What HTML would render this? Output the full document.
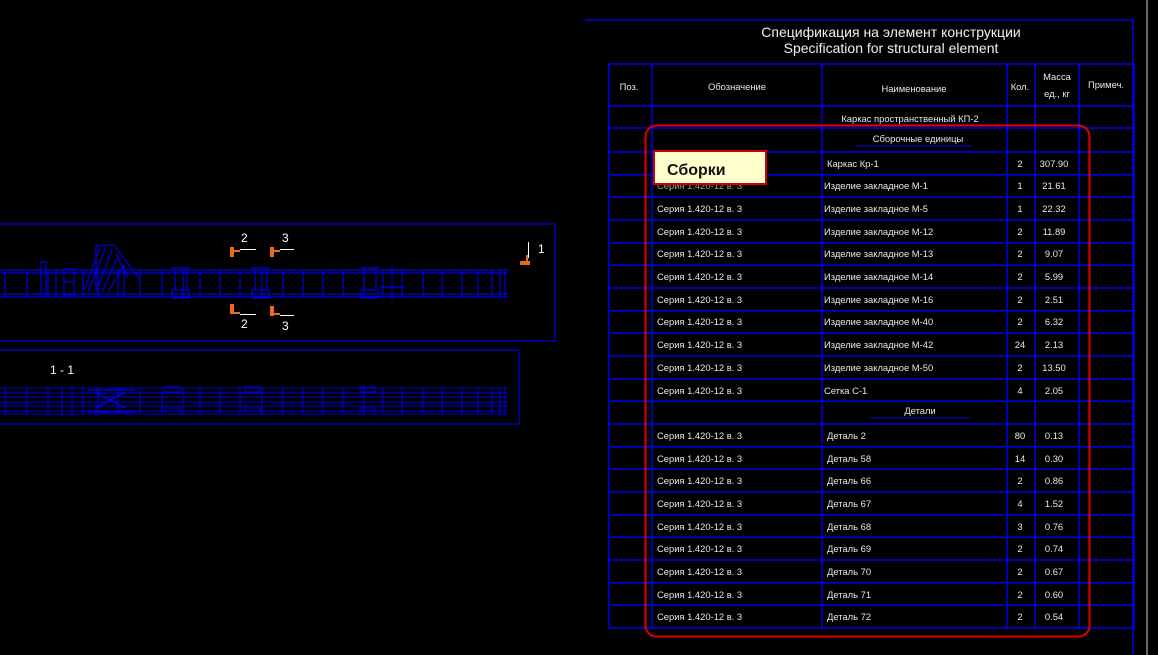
<!DOCTYPE html>
<html><head><meta charset="utf-8"><style>
html,body{margin:0;padding:0;background:#000;width:1158px;height:655px;overflow:hidden}
svg{display:block}
.t{font-family:"Liberation Sans",sans-serif;font-size:9.4px;fill:#e8e8e8}
.h{font-family:"Liberation Sans",sans-serif;font-size:14px;fill:#f0f0f0}
.w{font-family:"Liberation Sans",sans-serif;font-size:12px;fill:#fff}
</style></head><body>
<svg width="1158" height="655" viewBox="0 0 1158 655" xmlns="http://www.w3.org/2000/svg">
<g stroke="#0000dd" stroke-width="1.5" fill="none">
<path d="M585 20H1133V655"/>
</g>
<line x1="1147" y1="0" x2="1147" y2="655" stroke="#888" stroke-width="1.5"/>
<text class="h" x="891" y="37" text-anchor="middle">Спецификация на элемент конструкции</text>
<text class="h" x="891" y="53" text-anchor="middle">Specification for structural element</text>
<g stroke="#0000ee" stroke-width="1.5" fill="none">
<rect x="609" y="64" width="525" height="564"/>
<path d="M652 64V628M822 64V628M1007 64V628M1035 64V628M1079 64V628"/>
<path d="M609 106H1134M609 128H1134M609 152H1134
M609 174.7H1134M609 197.3H1134M609 220H1134M609 242.7H1134M609 265.3H1134M609 288H1134M609 310.7H1134M609 333.3H1134M609 356H1134M609 378.7H1134M609 401.3H1134M609 424H1134M609 446.7H1134M609 469.3H1134M609 492H1134M609 514.7H1134M609 537.3H1134M609 560H1134M609 582.7H1134M609 605.3H1134"/>
<path d="M855 146H972M870 418H970" stroke-width="1"/>
</g>
<g class="t">
<text x="629" y="90" text-anchor="middle">Поз.</text>
<text x="737" y="90" text-anchor="middle">Обозначение</text>
<text x="914" y="92" text-anchor="middle">Наименование</text>
<text x="1020" y="90" text-anchor="middle">Кол.</text>
<text x="1057" y="80" text-anchor="middle">Масса</text>
<text x="1057" y="97" text-anchor="middle">ед., кг</text>
<text x="1106" y="88" text-anchor="middle">Примеч.</text>
<text x="910" y="122" text-anchor="middle">Каркас пространственный КП-2</text>
<text x="918" y="142" text-anchor="middle">Сборочные единицы</text>
<text x="920" y="414" text-anchor="middle">Детали</text>
</g>
<g class="t">
<text x="827" y="167">Каркас Кр-1</text><text x="1020" y="167" text-anchor="middle">2</text><text x="1054" y="167" text-anchor="middle">307.90</text>
<text x="657" y="189">Серия 1.420-12 в. 3</text><text x="824" y="189">Изделие закладное М-1</text><text x="1020" y="189" text-anchor="middle">1</text><text x="1054" y="189" text-anchor="middle">21.61</text>
<text x="657" y="212">Серия 1.420-12 в. 3</text><text x="824" y="212">Изделие закладное М-5</text><text x="1020" y="212" text-anchor="middle">1</text><text x="1054" y="212" text-anchor="middle">22.32</text>
<text x="657" y="235">Серия 1.420-12 в. 3</text><text x="824" y="235">Изделие закладное М-12</text><text x="1020" y="235" text-anchor="middle">2</text><text x="1054" y="235" text-anchor="middle">11.89</text>
<text x="657" y="257">Серия 1.420-12 в. 3</text><text x="824" y="257">Изделие закладное М-13</text><text x="1020" y="257" text-anchor="middle">2</text><text x="1054" y="257" text-anchor="middle">9.07</text>
<text x="657" y="280">Серия 1.420-12 в. 3</text><text x="824" y="280">Изделие закладное М-14</text><text x="1020" y="280" text-anchor="middle">2</text><text x="1054" y="280" text-anchor="middle">5.99</text>
<text x="657" y="303">Серия 1.420-12 в. 3</text><text x="824" y="303">Изделие закладное М-16</text><text x="1020" y="303" text-anchor="middle">2</text><text x="1054" y="303" text-anchor="middle">2.51</text>
<text x="657" y="325">Серия 1.420-12 в. 3</text><text x="824" y="325">Изделие закладное М-40</text><text x="1020" y="325" text-anchor="middle">2</text><text x="1054" y="325" text-anchor="middle">6.32</text>
<text x="657" y="348">Серия 1.420-12 в. 3</text><text x="824" y="348">Изделие закладное М-42</text><text x="1020" y="348" text-anchor="middle">24</text><text x="1054" y="348" text-anchor="middle">2.13</text>
<text x="657" y="371">Серия 1.420-12 в. 3</text><text x="824" y="371">Изделие закладное М-50</text><text x="1020" y="371" text-anchor="middle">2</text><text x="1054" y="371" text-anchor="middle">13.50</text>
<text x="657" y="394">Серия 1.420-12 в. 3</text><text x="824" y="394">Сетка С-1</text><text x="1020" y="394" text-anchor="middle">4</text><text x="1054" y="394" text-anchor="middle">2.05</text>
<text x="657" y="439">Серия 1.420-12 в. 3</text><text x="827" y="439">Деталь 2</text><text x="1020" y="439" text-anchor="middle">80</text><text x="1054" y="439" text-anchor="middle">0.13</text>
<text x="657" y="462">Серия 1.420-12 в. 3</text><text x="827" y="462">Деталь 58</text><text x="1020" y="462" text-anchor="middle">14</text><text x="1054" y="462" text-anchor="middle">0.30</text>
<text x="657" y="484">Серия 1.420-12 в. 3</text><text x="827" y="484">Деталь 66</text><text x="1020" y="484" text-anchor="middle">2</text><text x="1054" y="484" text-anchor="middle">0.86</text>
<text x="657" y="507">Серия 1.420-12 в. 3</text><text x="827" y="507">Деталь 67</text><text x="1020" y="507" text-anchor="middle">4</text><text x="1054" y="507" text-anchor="middle">1.52</text>
<text x="657" y="530">Серия 1.420-12 в. 3</text><text x="827" y="530">Деталь 68</text><text x="1020" y="530" text-anchor="middle">3</text><text x="1054" y="530" text-anchor="middle">0.76</text>
<text x="657" y="552">Серия 1.420-12 в. 3</text><text x="827" y="552">Деталь 69</text><text x="1020" y="552" text-anchor="middle">2</text><text x="1054" y="552" text-anchor="middle">0.74</text>
<text x="657" y="575">Серия 1.420-12 в. 3</text><text x="827" y="575">Деталь 70</text><text x="1020" y="575" text-anchor="middle">2</text><text x="1054" y="575" text-anchor="middle">0.67</text>
<text x="657" y="598">Серия 1.420-12 в. 3</text><text x="827" y="598">Деталь 71</text><text x="1020" y="598" text-anchor="middle">2</text><text x="1054" y="598" text-anchor="middle">0.60</text>
<text x="657" y="620">Серия 1.420-12 в. 3</text><text x="827" y="620">Деталь 72</text><text x="1020" y="620" text-anchor="middle">2</text><text x="1054" y="620" text-anchor="middle">0.54</text>
</g>
<rect x="645.5" y="125.5" width="444" height="511" rx="11" fill="none" stroke="#e00000" stroke-width="2"/>
<rect x="657" y="154" width="112" height="35" fill="#000" opacity="0.35"/>
<rect x="654" y="151" width="112" height="33" fill="#ffffcc" stroke="#d00000" stroke-width="2"/>
<text x="667" y="175" style="font-family:'Liberation Sans',sans-serif;font-size:16px;font-weight:bold;fill:#111">Сборки</text>

<g stroke="#0000dd" stroke-width="1.2" fill="none">
<path d="M-1 224H555V341H-1"/>
<path d="M-1 350H519V424H-1"/>
<path d="M0 270H508M0 273H508M0 294H508M0 297H508"/>
<path d="M5 270V297M27 270V297M48 270V297M56 270V297M83 270V297M98 270V297M118 270V297M140 270V297M162 270V297M183 270V297M200 270V297M220 270V297M240 270V297M262 270V297M283 270V297M303 270V297M323 270V297M343 270V297M364 270V297M383 270V297M402 270V297M423 270V297M442 270V297M462 270V297M478 270V297M492 270V297M500 270V297M505 270V297"/>
<path d="M41 262V297M46 262V297M41 262H46"/>
<path d="M64 269V295H74V269ZM64 282H74"/>
<path d="M96 244V290M96 246L114 245L140 280M100 248L84 290M106 247L88 292M112 250L96 292M118 256L102 292M124 265L108 292M116 254L128 278M124 264V296"/>
<path d="M175 268V290H187V268M171 268H190M172 290H189V298H172Z"/>
<path d="M255 268V290H267V268M251 268H270M252 290H269V298H252Z"/>
<path d="M364 268V290H376V268M360 268H379M361 290H378V298H361Z"/>
<path d="M380 270H405M380 287H405M392 265V300"/>
</g>
<g stroke="#0000dd" stroke-width="1" fill="none">
<path d="M0 388H508M0 393H508M0 397H508M0 402H508M0 406H508M0 411H508M0 414H508"/>
<path d="M5 388V414M27 388V414M48 388V414M62 386V416M72 386V416M83 386V414M98 388V414M118 388V414M140 388V414M162 388V414M183 388V414M200 388V414M220 388V414M240 388V414M262 388V414M283 388V414M303 388V414M323 388V414M343 388V414M364 388V414M383 388V414M402 388V414M423 388V414M442 388V414M462 388V414M478 388V414M492 388V414M500 388V414M505 388V414"/>
<path d="M88 390H135M88 412H135M95 392L125 408M95 408L125 392" stroke-width="1.6"/>
<path d="M165 387H180V392H165ZM165 408H180V414H165ZM245 387H260V392H245ZM245 408H260V414H245ZM360 387H375V392H360ZM360 408H375V414H360Z"/>
</g>
<text class="w" x="50" y="374">1 - 1</text>
<g fill="#e86a1a">
<rect x="230" y="247" width="4" height="10"/><rect x="234" y="250" width="6" height="2"/>
<rect x="270" y="247" width="4" height="10"/><rect x="274" y="250" width="6" height="2"/>
<rect x="230" y="304" width="4" height="10"/><rect x="234" y="312" width="6" height="2"/>
<rect x="270" y="306" width="4" height="10"/><rect x="274" y="313" width="6" height="2"/>
<rect x="520" y="261" width="10" height="4"/><rect x="526" y="255" width="2" height="6"/>
</g>
<g stroke="#fff" stroke-width="1">
<path d="M240 249.5H256M280 249.5H294M240 314.5H256M280 315.5H294M528.5 242V258"/>
</g>
<text class="w" x="241" y="242">2</text>
<text class="w" x="282" y="242">3</text>
<text class="w" x="241" y="328">2</text>
<text class="w" x="282" y="330">3</text>
<text class="w" x="538" y="253">1</text>
</svg>
</body></html>
